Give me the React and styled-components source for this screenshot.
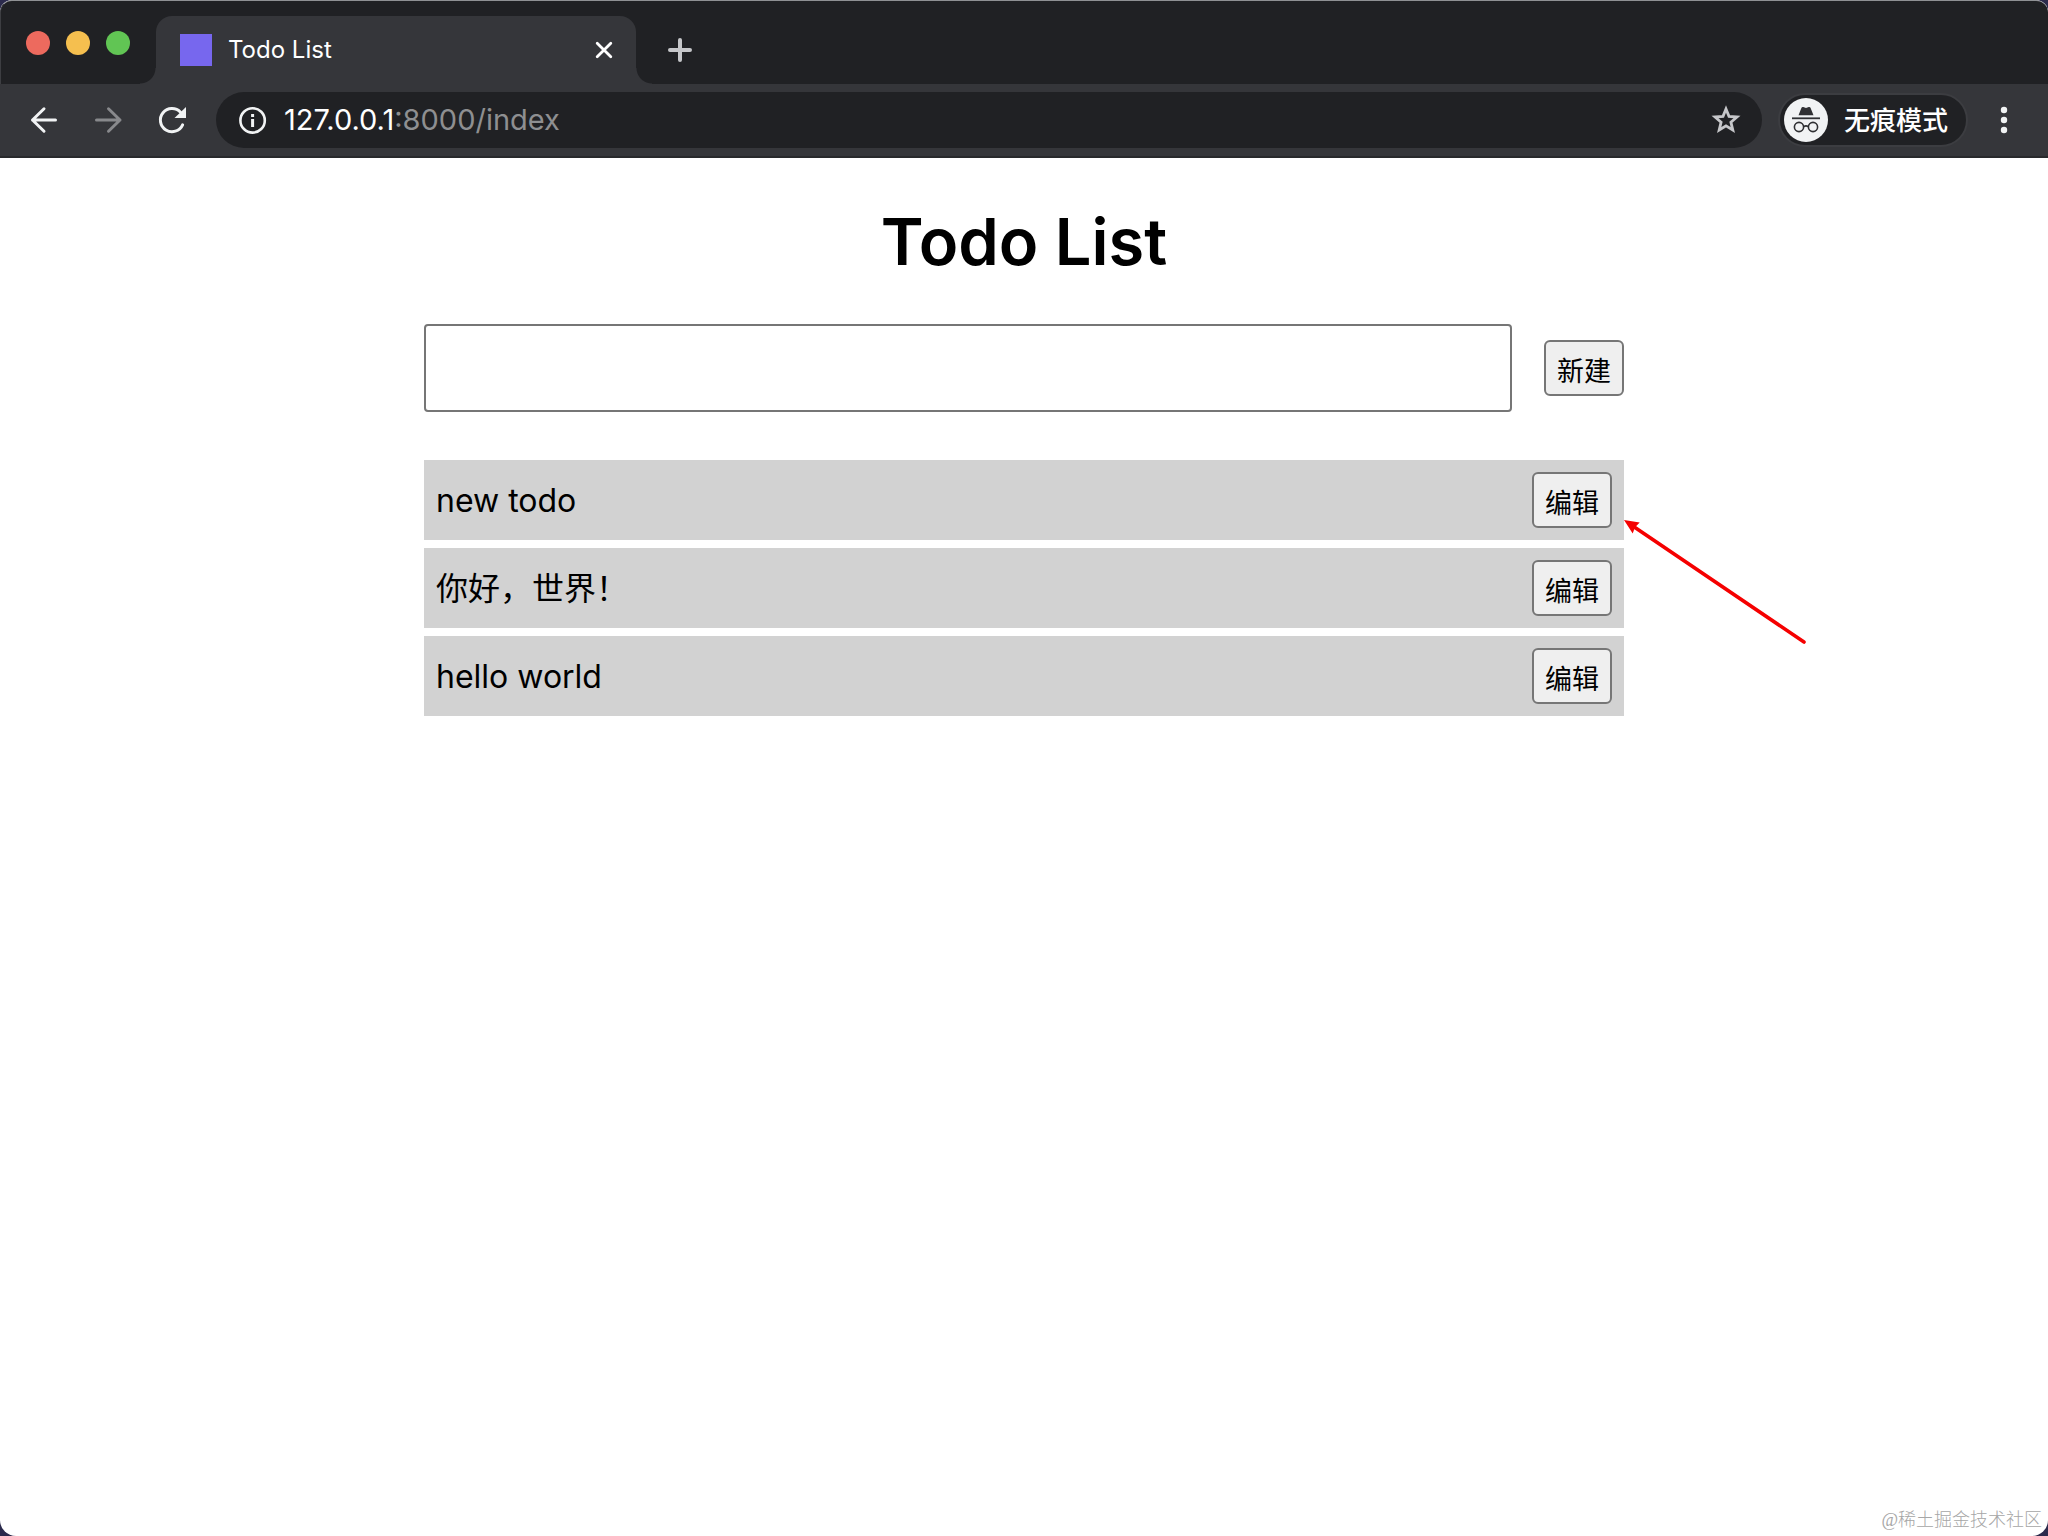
import React, { useState } from 'react';
import styled, { createGlobalStyle } from 'styled-components';

const GlobalStyle = createGlobalStyle`
  * {
    box-sizing: border-box;
  }

  body {
    margin: 0;
    background: #2b2a4c;
    font-family: Inter, 'Noto Sans CJK SC', sans-serif;
    color: #000;
  }

  button,
  input {
    font-family: inherit;
  }
`;

const Window = styled.div`
  position: relative;
  display: flex;
  flex-direction: column;
  min-height: 100vh;
  overflow: hidden;
  background: #fff;
  border-radius: 12px 12px 16px 16px;
`;

const TabStrip = styled.header`
  display: flex;
  height: 84px;
  background: #202124;
  border-top: 1px solid #8f9194;
  border-left: 1px solid #3d3e42;
  border-radius: 12px 12px 0 0;
`;

const TrafficLights = styled.div`
  display: flex;
  gap: 16px;
  width: 155px;
  padding: 30px 0 0 25px;
`;

const Light = styled.button`
  width: 24px;
  height: 24px;
  padding: 0;
  border: none;
  border-radius: 50%;
  background: ${props => props.$color};
`;

const Tab = styled.div`
  position: relative;
  display: flex;
  align-items: center;
  width: 480px;
  margin-top: 15px;
  padding: 0 20px 0 24px;
  background: #35363a;
  border-radius: 16px 16px 0 0;

  &::before,
  &::after {
    content: '';
    position: absolute;
    bottom: 0;
    width: 16px;
    height: 16px;
  }

  &::before {
    right: 100%;
    background: radial-gradient(circle at 0 0, #202124 15px, #35363a 16px);
  }

  &::after {
    left: 100%;
    background: radial-gradient(circle at 100% 0, #202124 15px, #35363a 16px);
  }
`;

const Favicon = styled.span`
  width: 32px;
  height: 32px;
  background: #7767ee;
`;

const TabTitle = styled.span`
  flex: 1;
  margin-left: 16px;
  color: #fff;
  font-size: 24px;
  line-height: 32px;
`;

const IconButton = styled.button`
  display: flex;
  align-items: center;
  justify-content: center;
  flex: none;
  width: ${props => props.$size || 32}px;
  height: ${props => props.$size || 32}px;
  padding: 0;
  border: none;
  background: none;
  color: ${props => props.$color || '#f1f3f4'};
`;

const NewTab = styled(IconButton)`
  margin: 33px 0 0 28px;
`;

const Toolbar = styled.nav`
  display: flex;
  align-items: center;
  height: 74px;
  padding: 0 28px;
  background: #35363a;
  border-bottom: 2px solid #28292c;
`;

const NavButtons = styled.div`
  display: flex;
  gap: 32px;
`;

const AddressBar = styled.div`
  display: flex;
  flex: 1;
  align-items: center;
  height: 56px;
  margin-left: 28px;
  padding: 0 20px;
  background: #202124;
  border-radius: 28px;
`;

const Url = styled.span`
  flex: 1;
  margin-left: 16px;
  color: #8e8f91;
  font-size: 29px;
  line-height: 36px;
`;

const Host = styled.span`
  color: #fff;
`;

const Incognito = styled.div`
  display: flex;
  align-items: center;
  gap: 16px;
  height: 54px;
  margin: 0 20px 0 16px;
  padding: 0 18px 0 4px;
  background: #202124;
  border: 2px solid #3c3d41;
  border-radius: 27px;
  color: #fff;
  font-size: 26px;
  font-weight: 500;
  line-height: 36px;
`;

const IncognitoLabel = styled.span`
  padding-top: 2px;
`;

const Page = styled.main`
  width: 1200px;
  max-width: 100%;
  margin: 0 auto;
  padding-top: 40px;
`;

const Title = styled.h1`
  margin: 0;
  font-size: 65px;
  font-weight: 600;
  line-height: 88px;
  text-align: center;
`;

const TodoForm = styled.form`
  display: flex;
  align-items: center;
  gap: 32px;
  margin: 38px 0 48px;
`;

const TodoInput = styled.input`
  flex: 1;
  min-width: 0;
  height: 88px;
  padding: 0 12px;
  border: 2px solid #767676;
  border-radius: 4px;
  background: #fff;
  font-size: 32px;
`;

const Button = styled.button`
  flex: none;
  width: 80px;
  height: 56px;
  padding: 7px 0 0;
  border: 2px solid #767676;
  border-radius: 6px;
  background: #efefef;
  color: #000;
  font-size: 27px;
  line-height: 36px;
`;

const TodoItems = styled.ul`
  display: flex;
  flex-direction: column;
  gap: 8px;
  margin: 0;
  padding: 0;
  list-style: none;
`;

const TodoItem = styled.li`
  position: relative;
  display: flex;
  align-items: center;
  justify-content: space-between;
  height: 80px;
  padding: 0 12px;
  background: #d2d2d2;
`;

const TodoText = styled.span`
  padding-top: 2px;
  font-size: 32px;
  line-height: 48px;
`;

const Pointer = styled.svg`
  position: absolute;
  top: 56px;
  left: 100%;
`;

const Watermark = styled.span`
  position: absolute;
  right: 6px;
  bottom: 4px;
  color: #a6a6a6;
  font-family: 'Liberation Serif', 'Noto Sans CJK SC', serif;
  font-size: 18px;
  font-weight: 300;
  line-height: 24px;
`;

const ArrowIcon = ({ forward }) => (
  <svg
    width="32"
    height="32"
    viewBox="0 0 32 32"
    fill="none"
    stroke="currentColor"
    strokeWidth="3"
    strokeLinecap="round"
    strokeLinejoin="round"
  >
    <path d={forward ? 'M4.5 16H28M16.5 4.8L28 16L16.5 27.2' : 'M27.5 16H4.5M16 4.8L4.5 16L16 27.2'} />
  </svg>
);

const ReloadIcon = () => (
  <svg width="32" height="32" viewBox="0 0 32 32" fill="none">
    <path
      d="M26.6 20.8A11.6 11.6 0 1 1 24.5 8.2"
      stroke="currentColor"
      strokeWidth="3"
      strokeLinecap="round"
    />
    <path d="M30 3V14H18.5Z" fill="currentColor" />
  </svg>
);

const InfoIcon = () => (
  <svg width="32" height="32" viewBox="0 0 32 32" fill="none">
    <circle cx="16.6" cy="16.4" r="12.2" stroke="currentColor" strokeWidth="2.6" />
    <path d="M16.6 15V23" stroke="currentColor" strokeWidth="3" />
    <path d="M16.6 10V13" stroke="currentColor" strokeWidth="3" />
  </svg>
);

const StarIcon = () => (
  <svg width="32" height="32" viewBox="0 0 32 32" fill="none">
    <path
      d="M16 5L19 12.4L27 13L20.9 18.2L22.8 26L16 21.8L9.2 26L11.1 18.2L5 13L13 12.4Z"
      stroke="currentColor"
      strokeWidth="2.8"
    />
  </svg>
);

const IncognitoIcon = () => (
  <svg width="44" height="44" viewBox="0 0 44 44" fill="none">
    <circle cx="22" cy="22" r="22" fill="#f1f3f4" />
    <path
      d="M14.5 17.3L17.5 9.8Q18 8.6 19.3 9L22 9.9L24.7 9Q26 8.6 26.5 9.8L29.5 17.3Z"
      fill="#303134"
    />
    <path d="M8 20.3H36" stroke="#303134" strokeWidth="1.8" />
    <circle cx="15" cy="29" r="4.6" stroke="#303134" strokeWidth="1.6" />
    <circle cx="29" cy="29" r="4.6" stroke="#303134" strokeWidth="1.6" />
    <path d="M19.6 28.6Q22 27.2 24.4 28.6" stroke="#303134" strokeWidth="1.6" />
  </svg>
);

const DotsIcon = () => (
  <svg width="32" height="32" viewBox="0 0 32 32" fill="currentColor">
    <circle cx="16" cy="6" r="3.2" />
    <circle cx="16" cy="16" r="3.2" />
    <circle cx="16" cy="26" r="3.2" />
  </svg>
);

const todos = [
  { id: 3, content: 'new todo' },
  { id: 2, content: '你好，世界！' },
  { id: 1, content: 'hello world' }
];

const App = () => {
  const [content, setContent] = useState('');

  return (
    <>
      <GlobalStyle />
      <Window>
        <TabStrip>
          <TrafficLights>
            <Light $color="#ed6a5e" aria-label="Close window" />
            <Light $color="#f5bf4f" aria-label="Minimize window" />
            <Light $color="#61c554" aria-label="Zoom window" />
          </TrafficLights>
          <Tab>
            <Favicon />
            <TabTitle>Todo List</TabTitle>
            <IconButton $size={24} $color="#fff" aria-label="Close tab">
              <svg width="24" height="24" viewBox="0 0 24 24" stroke="currentColor" strokeWidth="2.8" strokeLinecap="round">
                <path d="M5.2 5.2L18.8 18.8M18.8 5.2L5.2 18.8" />
              </svg>
            </IconButton>
          </Tab>
          <NewTab $color="#c6c7ca" aria-label="New tab">
            <svg width="32" height="32" viewBox="0 0 32 32" stroke="currentColor" strokeWidth="4" strokeLinecap="round">
              <path d="M16 6V26M6 16H26" />
            </svg>
          </NewTab>
        </TabStrip>

        <Toolbar>
          <NavButtons>
            <IconButton aria-label="Back">
              <ArrowIcon />
            </IconButton>
            <IconButton $color="#88898c" aria-label="Forward">
              <ArrowIcon forward />
            </IconButton>
            <IconButton aria-label="Reload">
              <ReloadIcon />
            </IconButton>
          </NavButtons>
          <AddressBar>
            <IconButton aria-label="Site information">
              <InfoIcon />
            </IconButton>
            <Url>
              <Host>127.0.0.1</Host>:8000/index
            </Url>
            <IconButton $color="#c6c7ca" aria-label="Bookmark">
              <StarIcon />
            </IconButton>
          </AddressBar>
          <Incognito>
            <IncognitoIcon />
            <IncognitoLabel>无痕模式</IncognitoLabel>
          </Incognito>
          <IconButton aria-label="Menu">
            <DotsIcon />
          </IconButton>
        </Toolbar>

        <Page>
          <Title>Todo List</Title>
          <TodoForm onSubmit={e => e.preventDefault()}>
            <TodoInput
              type="text"
              aria-label="Todo"
              value={content}
              onChange={e => setContent(e.target.value)}
            />
            <Button type="submit">新建</Button>
          </TodoForm>
          <TodoItems>
            {todos.map((todo, index) => (
              <TodoItem key={todo.id}>
                <TodoText>{todo.content}</TodoText>
                <Button type="button">编辑</Button>
                {index === 0 && (
                  <Pointer width="188" height="132" viewBox="0 0 188 132">
                    <path d="M11 11.4L180 126" stroke="#f50000" strokeWidth="3.6" strokeLinecap="round" />
                    <path d="M0 4L15.7 6.5L11 11.3L8.7 17.5Z" fill="#f50000" />
                  </Pointer>
                )}
              </TodoItem>
            ))}
          </TodoItems>
        </Page>
        <Watermark>@稀土掘金技术社区</Watermark>
      </Window>
    </>
  );
};

export default App;
